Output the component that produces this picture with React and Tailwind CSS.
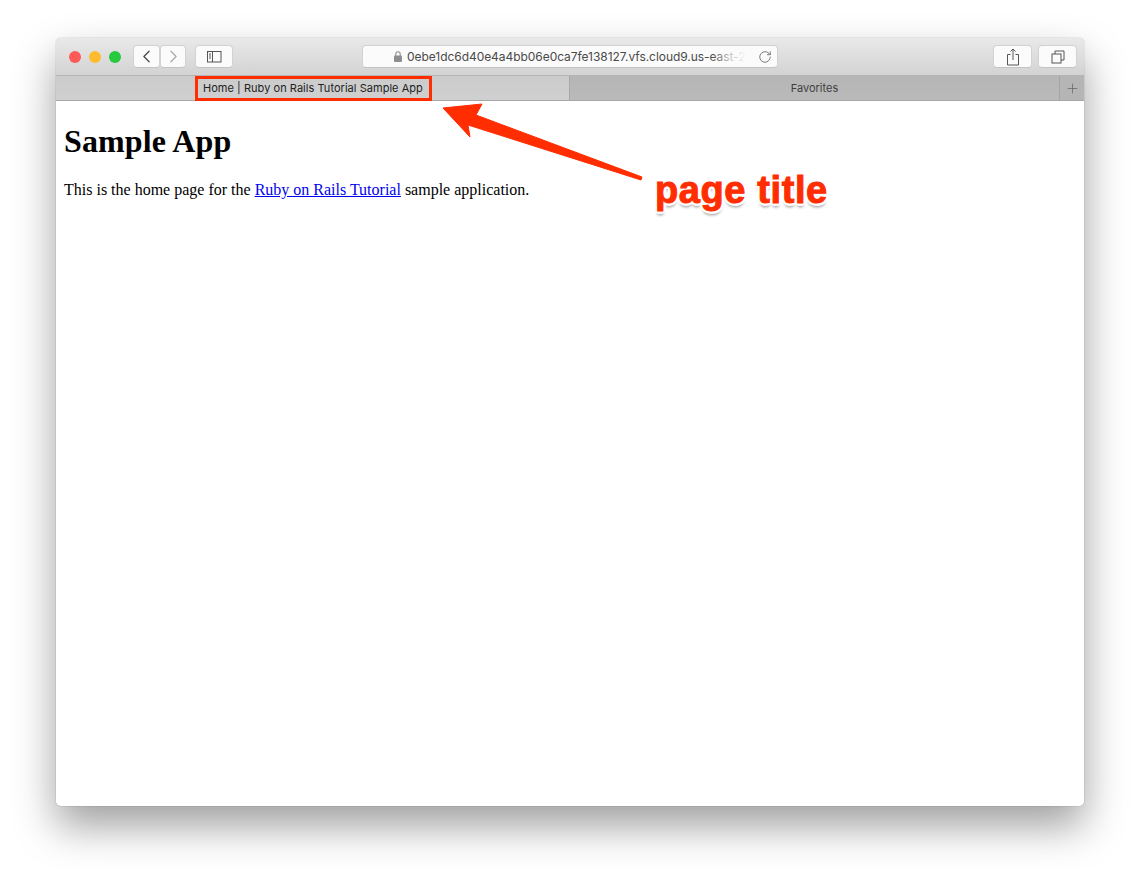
import { ChevronLeft, ChevronRight, RotateCw, Plus } from 'lucide-react'

function ToolButton({ className, children }) {
  return (
    <div className={`flex h-[23px] items-center justify-center rounded-[4px] border border-[#d2d2d2] border-b-[#c4c4c4] bg-[#fbfbfb] ${className}`}>
      {children}
    </div>
  )
}

function TitleBar() {
  return (
    <div className="flex h-[38px] items-center border-b border-[#b4b4b4] bg-gradient-to-b from-[#e9e9e9] to-[#d3d3d3] pl-[13px] pr-[7px]">
      <div className="flex items-center gap-2">
        <span className="h-3 w-3 rounded-full bg-[#fc5b57]" />
        <span className="h-3 w-3 rounded-full bg-[#fdbb2d]" />
        <span className="h-3 w-3 rounded-full bg-[#28c83f]" />
      </div>
      <div className="ml-[12px] flex">
        <ToolButton className="w-[27px]">
          <ChevronLeft size={21} strokeWidth={1.4} className="text-[#444]" />
        </ToolButton>
        <ToolButton className="w-[26px]">
          <ChevronRight size={21} strokeWidth={1.4} className="text-[#a8a8a8]" />
        </ToolButton>
      </div>
      <ToolButton className="ml-[9px] w-[38px]">
        <svg width="16" height="13" viewBox="0 0 16 13" fill="none" stroke="#555" strokeWidth="1">
          <rect x="1.5" y="1.5" width="13.5" height="10.5" />
          <path d="M6.5 1.5V12M3 4h2M3 6h2M3 8h2" />
        </svg>
      </ToolButton>
      <ToolButton className="ml-[129px] w-[416px] justify-start">
        <svg width="8" height="11" viewBox="0 0 8 11" className="ml-[31px]">
          <rect x="0" y="4.5" width="8" height="6.5" rx="1" fill="#8e8e8e" />
          <path d="M1.8 5V3a2.2 2.2 0 0 1 4.4 0v2" fill="none" stroke="#8e8e8e" strokeWidth="1.1" />
        </svg>
        <span className="relative ml-[5px] w-[340px] overflow-hidden whitespace-nowrap text-xs tracking-[-0.05px] text-[#4a4a4a] [font-family:Inter,'Liberation_Sans',sans-serif]">
          0ebe1dc6d40e4a4bb06e0ca7fe138127.vfs.cloud9.us-east-2
          <span className="absolute inset-y-0 right-0 w-[36px] bg-gradient-to-r from-transparent via-[#fbfbfbaa] to-[#fbfbfb]" />
        </span>
        <RotateCw size={14} strokeWidth={1.3} className="ml-[11px] text-[#555]" />
      </ToolButton>
      <ToolButton className="ml-auto w-[39px]">
        <svg width="14" height="18" viewBox="0 0 14 18" fill="none" stroke="#555" strokeWidth="1">
          <path d="M4.5 6.5H1.5V17H12.5V6.5H9.5M7 12V1M4.5 3.5 7 1l2.5 2.5" />
        </svg>
      </ToolButton>
      <ToolButton className="ml-[6px] w-[39px]">
        <svg width="14" height="14" viewBox="0 0 14 14" fill="none" stroke="#555" strokeWidth="1">
          <rect x="1" y="4" width="9" height="9" />
          <path d="M4 4V1h9v9h-3" />
        </svg>
      </ToolButton>
    </div>
  )
}

function TabBar() {
  return (
    <div className="flex h-[25px] border-b border-[#a8a8a8] text-[11px] text-[#333] [font-family:Inter,'Liberation_Sans',sans-serif]">
      <div className="flex w-[514px] items-center border-r border-[#a8a8a8] bg-gradient-to-b from-[#cbcbcb] to-[#d0d0d0] pl-[139px]">
        <div className="flex h-[25px] w-[237px] items-center border-[3px] border-[#ff2d00] pl-[5px] tracking-[0.04px] text-[#222]">
          Home | Ruby on Rails Tutorial Sample App
        </div>
      </div>
      <div className="flex flex-1 items-center justify-center bg-gradient-to-b from-[#b5b5b5] to-[#bababa] text-[#3f3f3f]">
        Favorites
      </div>
      <div className="flex w-[25px] items-center justify-center border-l border-[#a4a4a4] bg-[#b5b5b5]">
        <Plus size={15} strokeWidth={1} className="text-[#555]" />
      </div>
    </div>
  )
}

export default function App() {
  return (
    <div className="relative h-[880px] w-[1140px] overflow-hidden bg-white pl-[56px] pt-[38px]">
      <div className="flex h-[768px] w-[1028px] flex-col overflow-hidden rounded-[5px] shadow-[0_0_1px_rgba(0,0,0,0.55),0_20px_42px_rgba(0,0,0,0.38)]">
        <TitleBar />
        <TabBar />
        <main className="flex-1 bg-white px-2 text-black [font-family:'Liberation_Serif',serif]">
          <h1 className="mt-[22px] text-[32px] leading-[37px] font-bold tracking-[0.1px]">Sample App</h1>
          <p className="mt-[21px] text-base leading-[18px]">
            This is the home page for the{' '}
            <a href="#" className="text-[#0000ee] underline">Ruby on Rails Tutorial</a>{' '}
            sample application.
          </p>
        </main>
      </div>

      <svg className="absolute left-[430px] top-[95px]" width="230" height="100" viewBox="0 0 230 100">
        <path d="M13 13 52 9 46 20 212 82 211 85 38 30 40 42Z" fill="#ff2d00" stroke="#ff2d00" strokeLinejoin="round" />
      </svg>
      <span className="absolute left-[655px] top-[168px] text-[38px] leading-[44px] font-bold tracking-[0.6px] whitespace-nowrap text-[#ff2d00] [-webkit-text-stroke:1px_#ff2d00] [font-family:'Liberation_Sans',sans-serif] [text-shadow:0_3px_1px_#fff,0_-2px_1px_#fff,3px_0_1px_#fff,-3px_0_1px_#fff,2px_2px_1px_#fff,-2px_2px_1px_#fff,2px_-2px_1px_#fff,-2px_-2px_1px_#fff,0_4px_3px_rgba(0,0,0,0.45)]">
        page title
      </span>
    </div>
  )
}
